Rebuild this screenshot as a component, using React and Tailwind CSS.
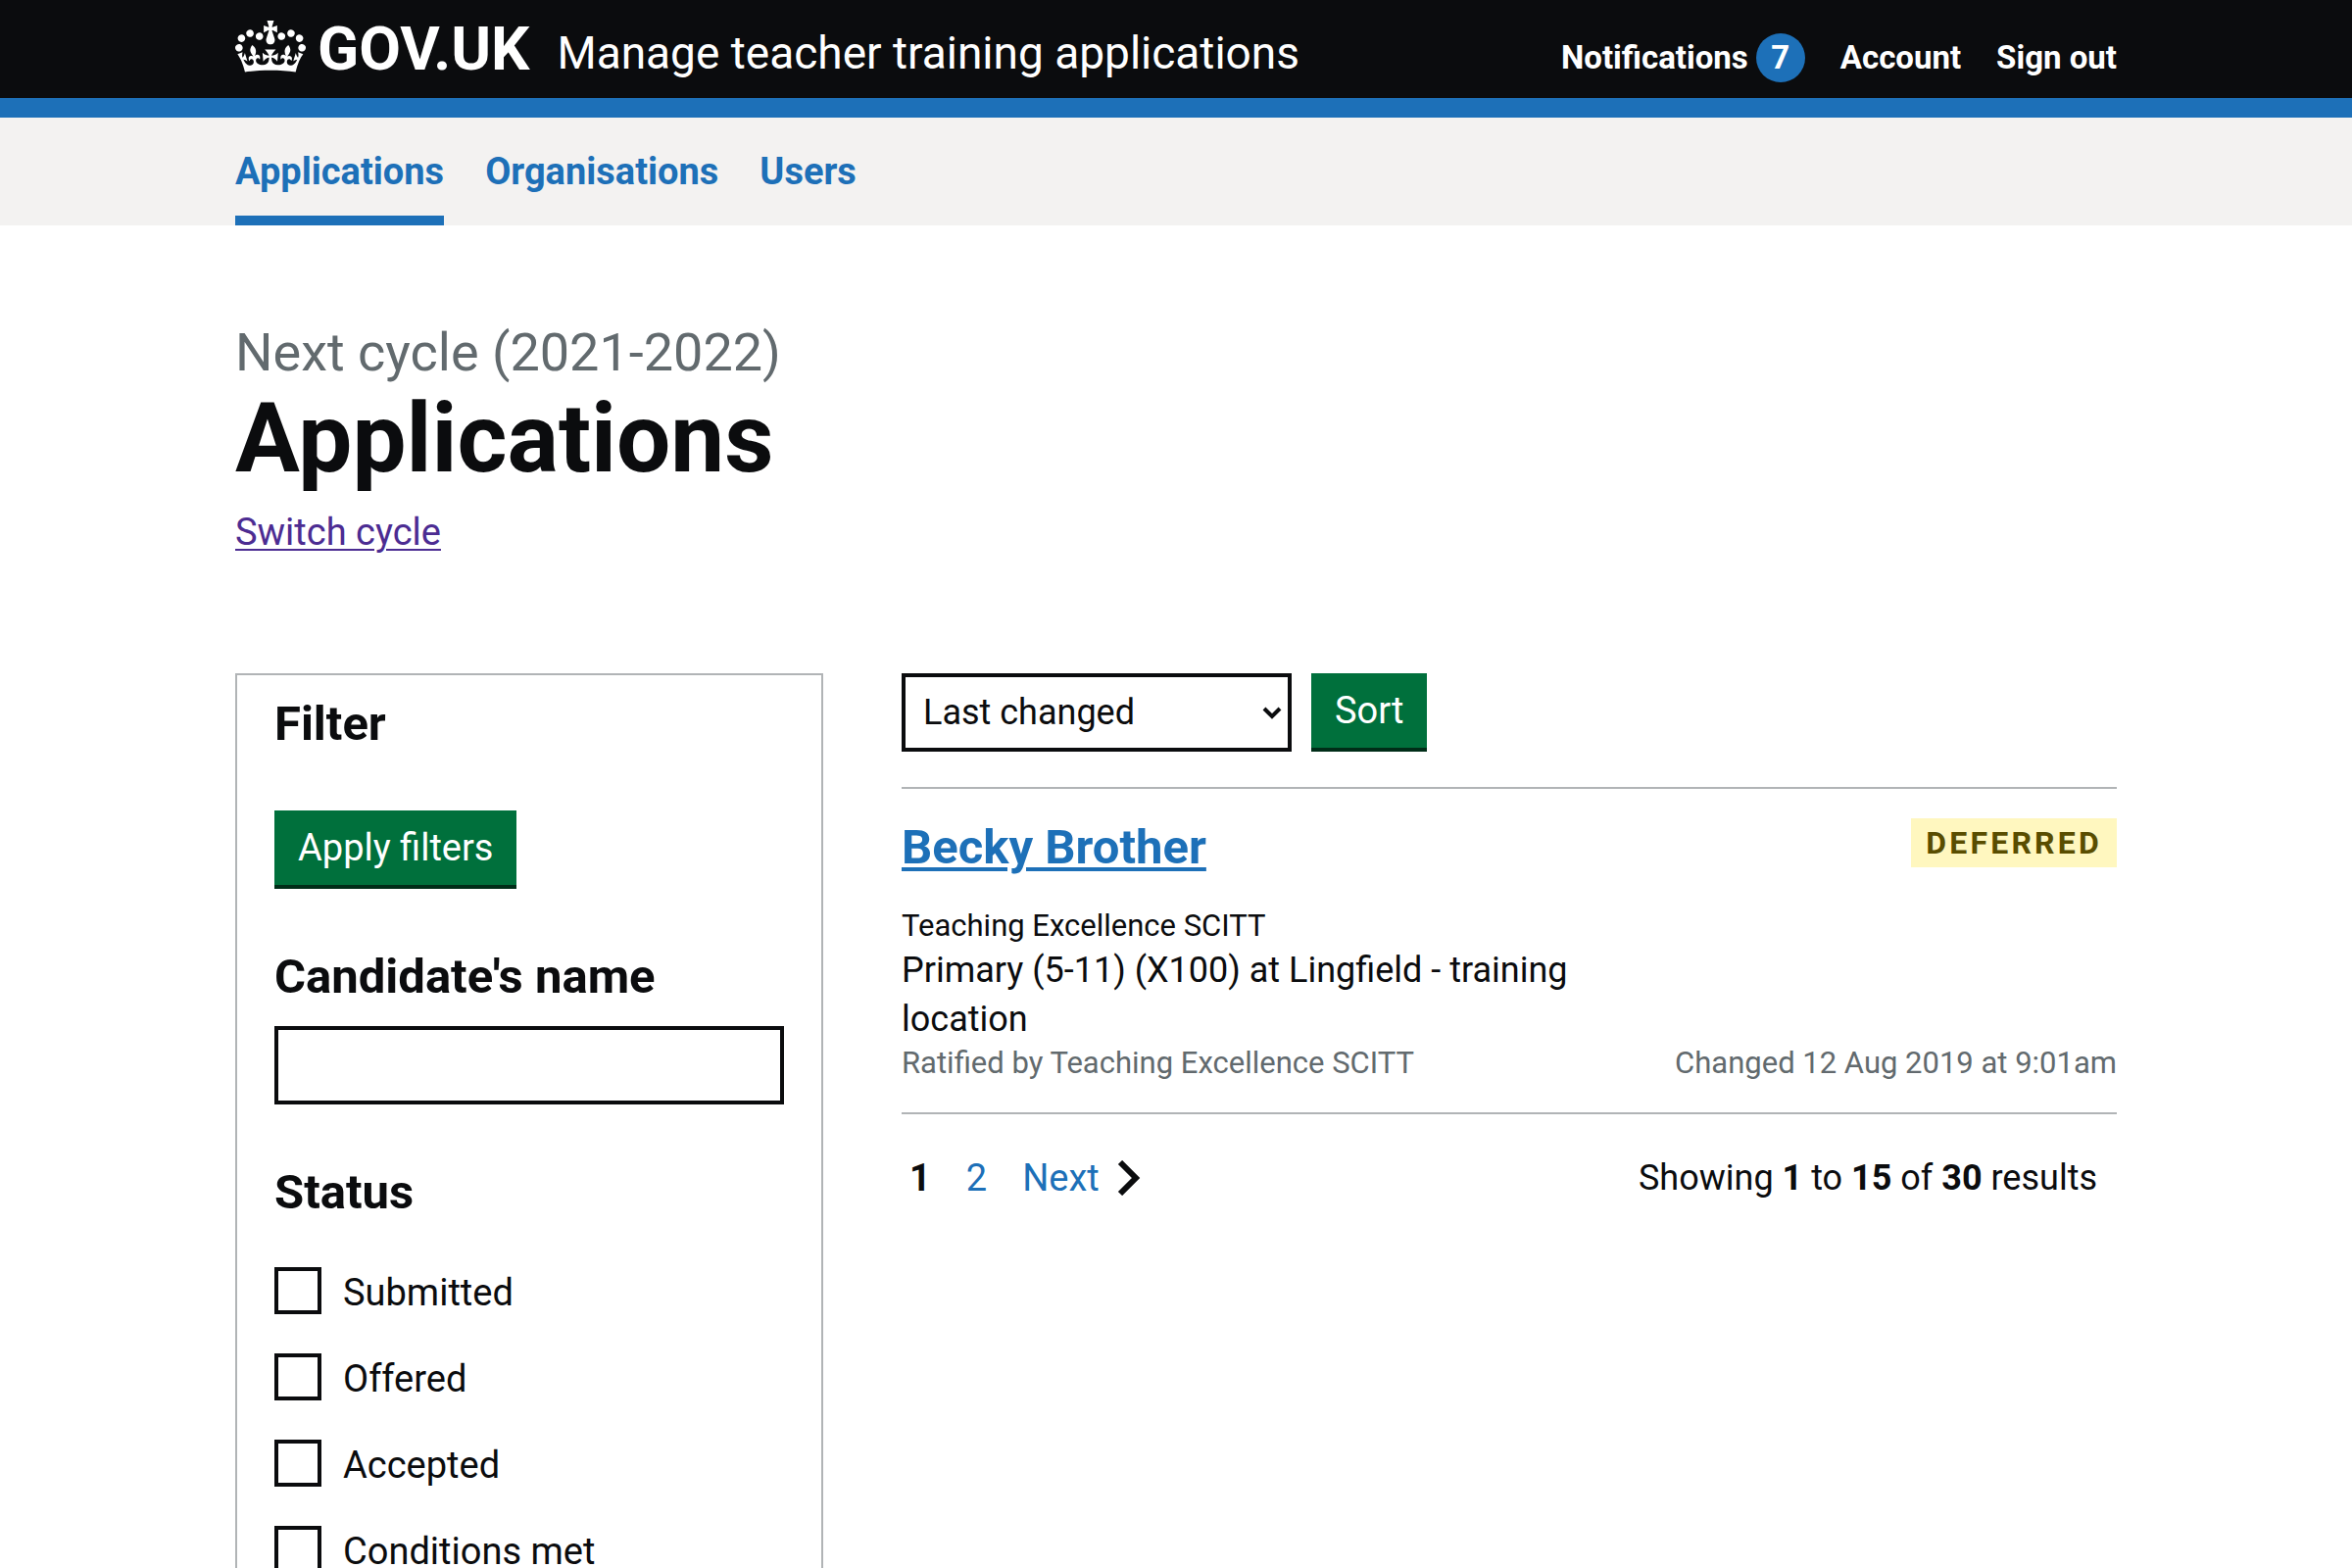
const STATUSES = ["Submitted", "Offered", "Accepted", "Conditions met"];

function Crown() {
  return (
    <svg className="w-[72px] h-[53px] shrink-0" viewBox="0 0 132 97" fill="currentColor" fillRule="evenodd" aria-hidden="true">
      <path d="M25 30.2c3.5 1.5 7.7-.2 9.1-3.7 1.5-3.6-.2-7.8-3.9-9.2-3.6-1.4-7.6.3-9.1 3.9-1.4 3.5.3 7.5 3.9 9zM9 39.5c3.6 1.5 7.8-.2 9.2-3.7 1.5-3.6-.2-7.8-3.9-9.1-3.6-1.5-7.6.2-9.1 3.8-1.4 3.5.3 7.5 3.8 9zM4.4 57.2c3.5 1.5 7.7-.2 9.1-3.8 1.5-3.6-.2-7.7-3.9-9.1-3.5-1.5-7.6.3-9.1 3.8-1.4 3.5.3 7.6 3.9 9.1zm38.3-21.4c3.5 1.5 7.7-.2 9.1-3.8 1.5-3.6-.2-7.7-3.9-9.1-3.6-1.5-7.6.3-9.1 3.8-1.3 3.6.4 7.7 3.9 9.1zm64.4-5.6c-3.6 1.5-7.8-.2-9.1-3.7-1.5-3.6.2-7.8 3.8-9.2 3.6-1.4 7.7.3 9.2 3.9 1.3 3.5-.4 7.5-3.9 9zm15.9 9.3c-3.6 1.5-7.7-.2-9.1-3.7-1.5-3.6.2-7.8 3.7-9.1 3.6-1.5 7.7.2 9.2 3.8 1.5 3.5-.3 7.5-3.8 9zm4.7 17.7c-3.6 1.5-7.8-.2-9.2-3.8-1.5-3.6.2-7.7 3.9-9.1 3.6-1.5 7.7.3 9.2 3.8 1.3 3.5-.4 7.6-3.9 9.1zM89.3 35.8c-3.6 1.5-7.8-.2-9.2-3.8-1.4-3.6.2-7.7 3.9-9.1 3.6-1.5 7.7.3 9.2 3.8 1.4 3.6-.3 7.7-3.9 9.1zM69.7 17.7l8.9 4.7V9.3l-8.9 2.8c-.2-.3-.5-.6-.9-.9L72.4 0H59.6l3.5 11.2c-.3.3-.6.5-.9.9l-8.8-2.8v13.1l8.8-4.7c.3.3.6.7.9.9l-5 15.4v.1c-.2.8-.4 1.6-.4 2.4 0 4.1 3.1 7.5 7 8.1h.2c.3 0 .7.1 1 .1.4 0 .7 0 1-.1h.2c4-.6 7.1-4.1 7.1-8.1 0-.8-.1-1.7-.4-2.4V34l-5.1-15.4c.4-.2.7-.6 1-.9zM66 92.8c16.9 0 32.8 1.1 47.1 3.2 4-16.9 8.9-26.7 14-33.5l-9.6-3.4c1 4.9 1.1 7.2 0 10.2-1.5-1.4-3-4.3-4.2-8.7L108.6 76c2.8-2 5-3.2 7.5-3.3-4.4 9.4-10 11.9-13.6 11.2-4.3-.8-6.3-4.6-5.6-7.9 1-4.7 5.7-5.9 8-.5 4.3-8.7-3-11.4-7.6-8.8 7.1-7.2 7.9-13.5 2.1-21.1-8 6.1-8.1 12.3-4.5 20.8-4.7-5.4-12.1-2.5-9.5 6.2 3.4-5.2 7.9-2 7.2 3.1-.6 4.3-6.4 7.8-13.5 7.2-10.3-.9-10.9-8-11.2-13.8 2.5-.5 7.1 1.8 11 7.3L80.2 60c-4.1 4.4-8 5.3-12.3 5.4 1.4-4.4 8-11.6 8-11.6H55.5s6.4 7.2 7.9 11.6c-4.2-.1-8-1-12.3-5.4l1.4 16.4c3.9-5.5 8.5-7.7 10.9-7.3-.3 5.8-.9 12.8-11.1 13.8-7.2.6-12.9-2.9-13.5-7.2-.7-5 3.8-8.3 7.1-3.1 2.7-8.7-4.6-11.6-9.4-6.2 3.7-8.5 3.6-14.7-4.6-20.8-5.8 7.6-5 13.9 2.2 21.1-4.7-2.6-11.9.1-7.7 8.8 2.3-5.5 7.1-4.2 8.1.5.7 3.3-1.3 7.1-5.7 7.9-3.5.7-9-1.8-13.5-11.2 2.5.1 4.7 1.3 7.5 3.3l-4.7-15.4c-1.2 4.4-2.7 7.2-4.3 8.7-1.1-3-.9-5.3 0-10.2l-9.5 3.4c5 6.9 9.9 16.7 14 33.5 14.8-2.1 30.8-3.2 47.7-3.2z" />
    </svg>
  );
}

function Header() {
  return (
    <header className="bg-[#0b0c0e] text-white border-b-[20px] border-[#1d70b8]">
      <div className="max-w-[1920px] mx-auto flex justify-between">
        <div className="flex items-start">
          <a href="#" className="flex items-start gap-3 text-[62px] leading-[100px] font-bold">
            <span className="pt-[21px]"><Crown /></span>
            <span>GOV.UK</span>
          </a>
          <a href="#" className="ml-7 text-[46px] leading-[108px] -mb-2">Manage teacher training applications</a>
        </div>
        <nav aria-label="Account" className="pt-[34px] flex items-start gap-9 text-[33px] leading-[50px] font-bold">
          <a href="#" className="flex gap-2">
            Notifications
            <span className="size-[50px] rounded-full bg-[#1d70b8] text-center">7</span>
          </a>
          <a href="#">Account</a>
          <a href="#">Sign out</a>
        </nav>
      </div>
    </header>
  );
}

function PrimaryNav() {
  return (
    <nav aria-label="Primary" className="bg-[#f3f2f1]">
      <div className="max-w-[1920px] mx-auto flex gap-[42px] text-[38px] leading-[110px] font-bold text-[#1d70b8]">
        <a href="#" aria-current="page" className="shadow-[inset_0_-10px_0_#1d70b8]">Applications</a>
        <a href="#">Organisations</a>
        <a href="#">Users</a>
      </div>
    </nav>
  );
}

function Filters() {
  return (
    <form className="w-[600px] shrink-0 border-2 border-[#b1b4b6] px-[38px] pt-5 pb-10" onSubmit={(e) => e.preventDefault()}>
      <h2 className="text-[49px] leading-[60px] font-bold">Filter</h2>
      <button type="submit" className="mt-[58px] h-20 px-6 bg-[#00703c] border-b-4 border-[#002d18] text-white text-[38px] leading-[50px]">
        Apply filters
      </button>
      <label htmlFor="candidate" className="block mt-15 text-[49px] leading-[60px] font-bold">Candidate's name</label>
      <input id="candidate" type="text" className="block mt-5 w-full h-20 border-4 border-[#0b0c0e] px-4 text-[38px]" />
      <fieldset className="mt-15">
        <legend className="text-[49px] leading-[60px] font-bold">Status</legend>
        <div className="mt-[46px] flex flex-col gap-9">
          {STATUSES.map((s) => (
            <label key={s} className="flex items-start gap-[22px] text-[38px] leading-[52px]">
              <input type="checkbox" className="appearance-none size-12 shrink-0 border-4 border-[#0b0c0e] checked:bg-[#0b0c0e]" />
              {s}
            </label>
          ))}
        </div>
      </fieldset>
    </form>
  );
}

function SortBar() {
  return (
    <form className="flex gap-5" onSubmit={(e) => e.preventDefault()}>
      <div className="relative w-[398px]">
        <select aria-label="Sort by" className="appearance-none w-full h-20 border-4 border-[#0b0c0e] bg-white pl-[18px] text-[36px]">
          <option>Last changed</option>
          <option>Days left to respond</option>
        </select>
        <svg className="absolute right-[10px] top-[33px] w-5 h-4 pointer-events-none" viewBox="0 0 20 16" fill="none" stroke="#0b0c0e" strokeWidth="4" aria-hidden="true">
          <path d="M2 3l8 8 8-8" />
        </svg>
      </div>
      <button type="submit" className="h-20 px-6 bg-[#00703c] border-b-4 border-[#002d18] text-white text-[38px] leading-[50px]">Sort</button>
    </form>
  );
}

function ApplicationCard() {
  return (
    <article className="mt-9 border-y-2 border-[#b1b4b6] py-[30px]">
      <div className="flex items-start justify-between">
        <h3 className="text-[49px] leading-[60px] font-bold">
          <a href="#" className="text-[#1d70b8] underline decoration-4 underline-offset-4">Becky Brother</a>
        </h3>
        <strong className="bg-[#fff7bf] text-[#594d00] text-[32px] leading-[50px] font-bold uppercase tracking-widest px-[15px]">Deferred</strong>
      </div>
      <div className="mt-[30px] flex items-end justify-between">
        <div className="w-3/5">
          <p className="text-[31px] leading-[40px]">Teaching Excellence SCITT</p>
          <p className="text-[36px] leading-[50px]">Primary (5-11) (X100) at Lingfield - training location</p>
          <p className="text-[31px] leading-[40px] text-[#626a6e]">Ratified by Teaching Excellence SCITT</p>
        </div>
        <p className="text-[31px] leading-[40px] text-[#626a6e]">Changed 12 Aug 2019 at 9:01am</p>
      </div>
    </article>
  );
}

function Pagination() {
  return (
    <div className="mt-10 pl-2 pr-5 flex justify-between leading-[50px]">
      <nav aria-label="Pagination" className="flex gap-9 text-[38px] text-[#1d70b8]">
        <span aria-current="page" className="font-bold text-[#0b0c0e]">1</span>
        <a href="#">2</a>
        <a href="#" className="flex items-center gap-[18px]">
          Next
          <svg className="w-6 h-9" viewBox="0 0 24 36" fill="none" stroke="#0b0c0e" strokeWidth="6" aria-hidden="true">
            <path d="M3 2L19 18 3 34" />
          </svg>
        </a>
      </nav>
      <p className="text-[36px]">Showing <b>1</b> to <b>15</b> of <b>30</b> results</p>
    </div>
  );
}

export default function App() {
  return (
    <div className="h-screen overflow-y-auto bg-white text-[#0b0c0e] font-['Roboto',sans-serif]">
      <Header />
      <PrimaryNav />
      <main className="max-w-[1920px] mx-auto pt-[100px]">
        <h1>
          <span className="block text-[54px] leading-[60px] text-[#626a6e]">Next cycle (2021-2022)</span>
          <span className="block mt-2 text-[98px] leading-[100px] font-bold">Applications</span>
        </h1>
        <a href="#" className="inline-block mt-5 text-[38px] leading-[50px] text-[#4c2c92] underline decoration-2 underline-offset-4">Switch cycle</a>
        <div className="mt-[119px] flex items-start gap-20">
          <Filters />
          <section className="flex-1">
            <SortBar />
            <ApplicationCard />
            <Pagination />
          </section>
        </div>
      </main>
    </div>
  );
}
